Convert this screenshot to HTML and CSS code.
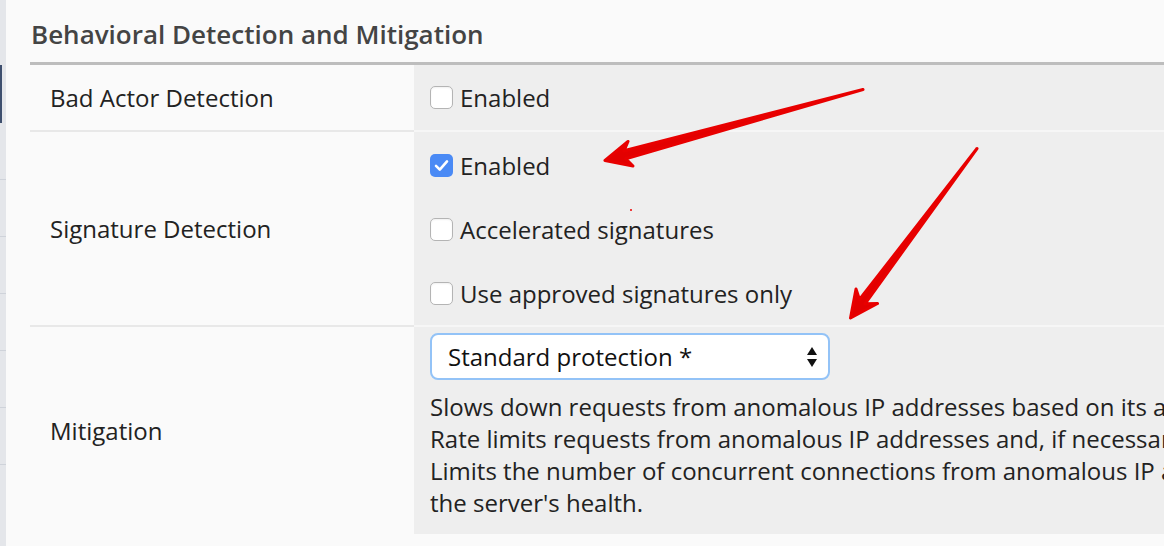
FILE: index.html
```html
<!DOCTYPE html>
<html>
<head>
<meta charset="utf-8">
<link rel="stylesheet" href="styles.css">
</head>
<body>
<div class="page">
  <nav class="sidebar">
    <div class="nav-item nav-active"></div>
    <div class="nav-item"></div>
    <div class="nav-item"></div>
    <div class="nav-item"></div>
    <div class="nav-item"></div>
    <div class="nav-item"></div>
    <div class="nav-item"></div>
  </nav>
  <main class="main">
    <h2 class="title">Behavioral Detection and Mitigation</h2>
    <div class="table">
      <div class="row row-bad">
        <div class="label">Bad Actor Detection</div>
        <div class="value value-center">
          <label class="option"><span class="check"></span>Enabled</label>
        </div>
      </div>
      <div class="row row-sig">
        <div class="label">Signature Detection</div>
        <div class="value value-list">
          <label class="option"><span class="check checked"><svg viewBox="0 0 23 23" width="23" height="23"><path d="M6 11.8 L9.8 15.6 L17 7.4" fill="none" stroke="#fff" stroke-width="2.6" stroke-linecap="round" stroke-linejoin="round"/></svg></span>Enabled</label>
          <label class="option"><span class="check"></span>Accelerated signatures</label>
          <label class="option"><span class="check"></span>Use approved signatures only</label>
        </div>
      </div>
      <div class="row row-mit">
        <div class="label">Mitigation</div>
        <div class="value value-mit">
          <div class="select">
            <span>Standard protection *</span>
            <svg class="select-arrows" viewBox="0 0 12 24" width="12" height="24"><path d="M6 2 L11 10 L1 10 Z M1 14 L11 14 L6 22 Z" fill="#111"/></svg>
          </div>
          <div class="desc">
            <div class="desc-line">Slows down requests from anomalous IP addresses based on its anomaly score.</div>
            <div class="desc-line">Rate limits requests from anomalous IP addresses and, if necessary, rate limits all requests based on</div>
            <div class="desc-line">Limits the number of concurrent connections from anomalous IP addresses and, if necessary, limits</div>
            <div class="desc-line">the server's health.</div>
          </div>
        </div>
      </div>
    </div>
  </main>
  <svg class="arrows" width="1164" height="546" viewBox="0 0 1164 546">
    <defs>
      <linearGradient id="rg" x1="0" y1="0" x2="1" y2="1">
        <stop offset="0" stop-color="#f20000"/>
        <stop offset="1" stop-color="#d10000"/>
      </linearGradient>
    </defs>
    <polygon points="863,89.5 624,150.8 628,141.5 605,160.5 633,166 625.8,158.8" fill="url(#rg)" stroke="#e80000" stroke-width="3" stroke-linejoin="round"/>
    <polygon points="977,148.5 859.5,299.5 856,289 850.5,318 877.5,303.5 865,303.8" fill="url(#rg)" stroke="#e80000" stroke-width="3" stroke-linejoin="round"/>
    <circle cx="631" cy="210" r="1" fill="#e00"/>
  </svg>
</div>
</body>
</html>
```

FILE: styles.css
```css
html, body {
  margin: 0;
  padding: 0;
  background: #fafafa;
  overflow: hidden;
}

body {
  font-family: "Open Sans", "DejaVu Sans", sans-serif;
  color: #222;
}

.page {
  position: relative;
  display: flex;
  width: 1164px;
  height: 546px;
  overflow: hidden;
}

.sidebar {
  width: 6px;
  flex: none;
  background: #e4e6ea;
  display: flex;
  flex-direction: column;
  padding-top: 65px;
}

.nav-item {
  height: 56px;
  border-bottom: 1px solid #cfd3da;
}

.nav-active {
  height: 58px;
  background: linear-gradient(to right, #3e4f6e 0, #3e4f6e 2px, transparent 2px);
  border-bottom: none;
}

.main {
  flex: 1;
  padding-left: 24px;
  min-width: 0;
}

.title {
  margin: 0;
  padding: 0 0 0 1px;
  height: 62px;
  line-height: 68px;
  font-size: 26px;
  font-weight: 600;
  color: #444;
  box-sizing: border-box;
  white-space: nowrap;
}

.table {
  border-top: 3px solid #bdbdbd;
}

.row {
  display: grid;
  grid-template-columns: 384px 1fr;
}

.row + .row .label {
  border-top: 2px solid #e8e8e8;
}

.row + .row .value {
  border-top: 2px solid #f6f6f6;
}

.label {
  display: flex;
  align-items: center;
  padding-left: 20px;
  font-size: 24px;
  color: #222;
}

.value {
  background: #eeeeee;
  padding-left: 16px;
  overflow: hidden;
}

.row-bad {
  height: 65px;
}

.row-sig {
  height: 195px;
}

.row-mit {
  height: 209px;
}

.value-center {
  display: flex;
  align-items: center;
}

.value-list {
  display: flex;
  flex-direction: column;
  padding-top: 1px;
}

.option {
  display: flex;
  align-items: center;
  gap: 7px;
  height: 64px;
  font-size: 24px;
  color: #222;
  white-space: nowrap;
}

.check {
  width: 23px;
  height: 23px;
  box-sizing: border-box;
  border: 1px solid #b4b4b4;
  border-radius: 5px;
  background: #fff;
  box-shadow: inset 0 1px 2px rgba(0,0,0,0.06);
  flex: none;
}

.check.checked {
  border: none;
  background: #4a8af5;
  box-shadow: none;
}

.check svg {
  display: block;
}

.value-mit {
  padding-top: 6px;
}

.select {
  width: 400px;
  height: 47px;
  box-sizing: border-box;
  border: 2px solid #93c3f7;
  border-radius: 8px;
  background: #fff;
  display: flex;
  align-items: center;
  justify-content: space-between;
  padding: 0 10px 0 16px;
  font-size: 24px;
  color: #111;
  white-space: nowrap;
}

.select-arrows {
  display: block;
}

.desc {
  margin-top: 11px;
  font-size: 24px;
  line-height: 32px;
  color: #222;
  font-stretch: 94%;
}

.desc-line {
  white-space: nowrap;
}

.arrows {
  position: absolute;
  left: 0;
  top: 0;
  pointer-events: none;
}
```
